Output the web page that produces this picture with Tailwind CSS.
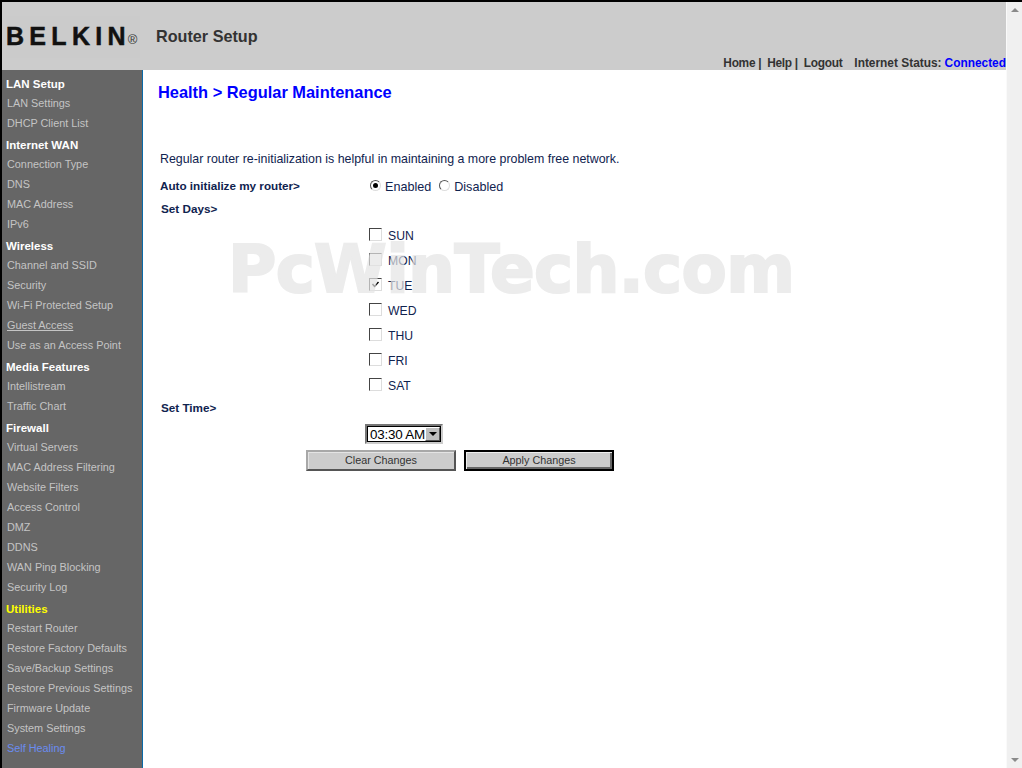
<!DOCTYPE html>
<html lang="en">
<head>
  <meta charset="UTF-8" />
  <title>Router Setup</title>
  <script src="https://cdn.jsdelivr.net/npm/@tailwindcss/browser@4"></script>
</head>
<body class="w-[1022px] h-[768px] overflow-hidden bg-white font-['Liberation_Sans',Arial,sans-serif] text-[#10234f]">
  <div class="relative flex h-[768px] border-t-2 border-l-2 border-black">
    <div class="flex-1 flex flex-col min-w-0">

      <!-- Header -->
      <header class="relative h-[68px] bg-[#cccccc] text-[#333333]">
        <div class="flex items-center h-full">
          <div class="w-[134px] ml-[4px] h-[42px] mt-[1px] bg-[#cbcbcb] flex items-center whitespace-nowrap">
            <span class="text-[25px] font-bold tracking-[5.3px] text-[#111111] [-webkit-text-stroke:0.5px_#111111]">BELKIN</span><span class="text-[13px] text-[#333333] -ml-[3px] mt-[6px]">®</span>
          </div>
          <div class="ml-[16px] mt-[1px] text-[16.2px] font-bold">Router Setup</div>
        </div>
        <div class="absolute right-0 bottom-0 flex items-baseline text-[11.9px] font-bold leading-[13px]">
          <span class="tracking-[-0.3px]">Home |</span><span class="ml-[6px] tracking-[-0.3px]">Help |</span><span class="ml-[6px] tracking-[-0.3px]">Logout</span><span class="ml-[12px]">Internet Status:</span><span class="ml-[3px] text-[#0000ff]">Connected</span>
        </div>
      </header>

      <div class="flex flex-1 min-h-0">
        <!-- Sidebar -->
        <nav class="w-[141px] shrink-0 bg-[#666666] border-r border-[#0b6aa8] pt-[2px] text-[10.85px] text-[#c4c4c4]">
          <div class="h-[21px] flex items-center pl-[4px] pt-[4px] text-[11.5px] font-bold text-white">LAN Setup</div>
          <a class="flex h-[20px] items-center pl-[5px]">LAN Settings</a>
          <a class="flex h-[20px] items-center pl-[5px]">DHCP Client List</a>
          <div class="h-[21px] flex items-center pl-[4px] pt-[4px] text-[11.5px] font-bold text-white">Internet WAN</div>
          <a class="flex h-[20px] items-center pl-[5px]">Connection Type</a>
          <a class="flex h-[20px] items-center pl-[5px]">DNS</a>
          <a class="flex h-[20px] items-center pl-[5px]">MAC Address</a>
          <a class="flex h-[20px] items-center pl-[5px]">IPv6</a>
          <div class="h-[21px] flex items-center pl-[4px] pt-[4px] text-[11.5px] font-bold text-white">Wireless</div>
          <a class="flex h-[20px] items-center pl-[5px]">Channel and SSID</a>
          <a class="flex h-[20px] items-center pl-[5px]">Security</a>
          <a class="flex h-[20px] items-center pl-[5px]">Wi-Fi Protected Setup</a>
          <a class="flex h-[20px] items-center pl-[5px]"><span class="underline">Guest Access</span></a>
          <a class="flex h-[20px] items-center pl-[5px]">Use as an Access Point</a>
          <div class="h-[21px] flex items-center pl-[4px] pt-[4px] text-[11.5px] font-bold text-white">Media Features</div>
          <a class="flex h-[20px] items-center pl-[5px]">Intellistream</a>
          <a class="flex h-[20px] items-center pl-[5px]">Traffic Chart</a>
          <div class="h-[21px] flex items-center pl-[4px] pt-[4px] text-[11.5px] font-bold text-white">Firewall</div>
          <a class="flex h-[20px] items-center pl-[5px]">Virtual Servers</a>
          <a class="flex h-[20px] items-center pl-[5px]">MAC Address Filtering</a>
          <a class="flex h-[20px] items-center pl-[5px]">Website Filters</a>
          <a class="flex h-[20px] items-center pl-[5px]">Access Control</a>
          <a class="flex h-[20px] items-center pl-[5px]">DMZ</a>
          <a class="flex h-[20px] items-center pl-[5px]">DDNS</a>
          <a class="flex h-[20px] items-center pl-[5px]">WAN Ping Blocking</a>
          <a class="flex h-[20px] items-center pl-[5px]">Security Log</a>
          <div class="h-[21px] flex items-center pl-[4px] pt-[4px] text-[11.5px] font-bold text-[#ffff00]">Utilities</div>
          <a class="flex h-[20px] items-center pl-[5px]">Restart Router</a>
          <a class="flex h-[20px] items-center pl-[5px]">Restore Factory Defaults</a>
          <a class="flex h-[20px] items-center pl-[5px]">Save/Backup Settings</a>
          <a class="flex h-[20px] items-center pl-[5px]">Restore Previous Settings</a>
          <a class="flex h-[20px] items-center pl-[5px]">Firmware Update</a>
          <a class="flex h-[20px] items-center pl-[5px]">System Settings</a>
          <a class="flex h-[20px] items-center pl-[5px] text-[#6a8cf0]">Self Healing</a>
        </nav>

        <!-- Content -->
        <main class="flex-1 pl-[15px] pt-[12px]">
          <h1 class="h-[21px] text-[16.4px] leading-[21px] font-bold text-[#0000ff]">Health &gt; Regular Maintenance</h1>
          <p class="mt-[48px] ml-[2px] text-[12.4px] leading-[16px]">Regular router re-initialization is helpful in maintaining a more problem free network.</p>

          <div class="mt-[12px] ml-[2px] flex h-[16px] items-center text-[12.6px]">
            <div class="w-[210px] mb-[2px] text-[11.7px] font-bold">Auto initialize my router&gt;</div>
            <span class="relative -top-[2px] w-[11px] h-[11px] rounded-full border border-[#555555] border-b-[#dddddd] border-r-[#dddddd] flex items-center justify-center"><span class="w-[5px] h-[5px] rounded-full bg-black"></span></span>
            <span class="ml-[4px]">Enabled</span>
            <span class="relative -top-[2px] ml-[8px] w-[11px] h-[11px] rounded-full border border-[#555555] border-b-[#dddddd] border-r-[#dddddd]"></span>
            <span class="ml-[4px]">Disabled</span>
          </div>

          <div class="mt-[6px] ml-[3px] h-[16px] leading-[16px] text-[11.7px] font-bold">Set Days&gt;</div>

          <div class="mt-[6px] ml-[211px] text-[12.2px]">
            <div class="flex items-center h-[25px]"><span class="relative -top-[1px] w-[13px] h-[13px] border border-t-[#444444] border-l-[#444444] border-r-[#dddddd] border-b-[#dddddd]"></span><span class="ml-[6px] mt-[2px]">SUN</span></div>
            <div class="flex items-center h-[25px]"><span class="relative -top-[1px] w-[13px] h-[13px] border border-t-[#444444] border-l-[#444444] border-r-[#dddddd] border-b-[#dddddd]"></span><span class="ml-[6px] mt-[2px]">MON</span></div>
            <div class="flex items-center h-[25px]"><span class="relative -top-[1px] w-[13px] h-[13px] border border-t-[#444444] border-l-[#444444] border-r-[#dddddd] border-b-[#dddddd]"><svg viewBox="0 0 11 11" class="w-[11px] h-[11px]"><path d="M2.5 5 L4.5 7.5 L8.5 3" fill="none" stroke="#000" stroke-width="1.4"/></svg></span><span class="ml-[6px] mt-[2px]">TUE</span></div>
            <div class="flex items-center h-[25px]"><span class="relative -top-[1px] w-[13px] h-[13px] border border-t-[#444444] border-l-[#444444] border-r-[#dddddd] border-b-[#dddddd]"></span><span class="ml-[6px] mt-[2px]">WED</span></div>
            <div class="flex items-center h-[25px]"><span class="relative -top-[1px] w-[13px] h-[13px] border border-t-[#444444] border-l-[#444444] border-r-[#dddddd] border-b-[#dddddd]"></span><span class="ml-[6px] mt-[2px]">THU</span></div>
            <div class="flex items-center h-[25px]"><span class="relative -top-[1px] w-[13px] h-[13px] border border-t-[#444444] border-l-[#444444] border-r-[#dddddd] border-b-[#dddddd]"></span><span class="ml-[6px] mt-[2px]">FRI</span></div>
            <div class="flex items-center h-[25px]"><span class="relative -top-[1px] w-[13px] h-[13px] border border-t-[#444444] border-l-[#444444] border-r-[#dddddd] border-b-[#dddddd]"></span><span class="ml-[6px] mt-[2px]">SAT</span></div>
          </div>

          <div class="mt-[2px] ml-[3px] h-[16px] leading-[16px] text-[11.7px] font-bold">Set Time&gt;</div>

          <div class="mt-[8px] ml-[207px] flex w-[78px] h-[20px] p-[1px] border-2 border-t-[#777777] border-l-[#777777] border-r-[#cccccc] border-b-[#cccccc] shadow-[inset_0_0_0_1px_#000000] text-black">
            <span class="flex-1 pl-[2px] text-[13.4px] tracking-[-0.2px] leading-[15px] whitespace-nowrap">03:30 AM</span>
            <span class="w-[15px] bg-[#bdbdbd] border border-t-white border-l-white border-r-[#555555] border-b-[#555555] flex items-center justify-center"><span class="w-0 h-0 border-x-[4px] border-x-transparent border-t-[4px] border-t-black"></span></span>
          </div>

          <div class="mt-[6px] ml-[148px] flex text-[10.8px] text-[#333333]">
            <button class="w-[150px] h-[21px] bg-[#cccccc] border-2 border-t-[#a8a8a8] border-l-[#a8a8a8] border-r-[#555555] border-b-[#555555] shadow-[inset_1px_1px_0_#e4e4e4]">Clear Changes</button>
            <button class="ml-[8px] w-[150px] h-[21px] bg-[#cccccc] border-2 border-black shadow-[inset_1px_1px_0_#eeeeee,inset_-2px_-2px_0_#666666]">Apply Changes</button>
          </div>
        </main>
      </div>
    </div>

    <!-- Scrollbar -->
    <div class="w-[16px] shrink-0 bg-[#f0f0f0] border-l border-[#fafafa] pt-[6px] flex flex-col items-center justify-between pb-[6px]">
      <span class="w-0 h-0 border-x-[4px] border-x-transparent border-b-[4px] border-b-[#8a8a8a]"></span>
      <span class="w-0 h-0 border-x-[4px] border-x-transparent border-t-[4px] border-t-[#8a8a8a]"></span>
    </div>

    <!-- Watermark -->
    <div class="absolute left-[226px] top-[230px] text-[66px] leading-[76px] tracking-[-0.7px] font-bold text-[#e4e4e4] opacity-70 [-webkit-text-stroke:2px_#e4e4e4] font-['DejaVu_Sans',sans-serif] pointer-events-none whitespace-nowrap">PcWinTech.com</div>
  </div>
</body>
</html>
